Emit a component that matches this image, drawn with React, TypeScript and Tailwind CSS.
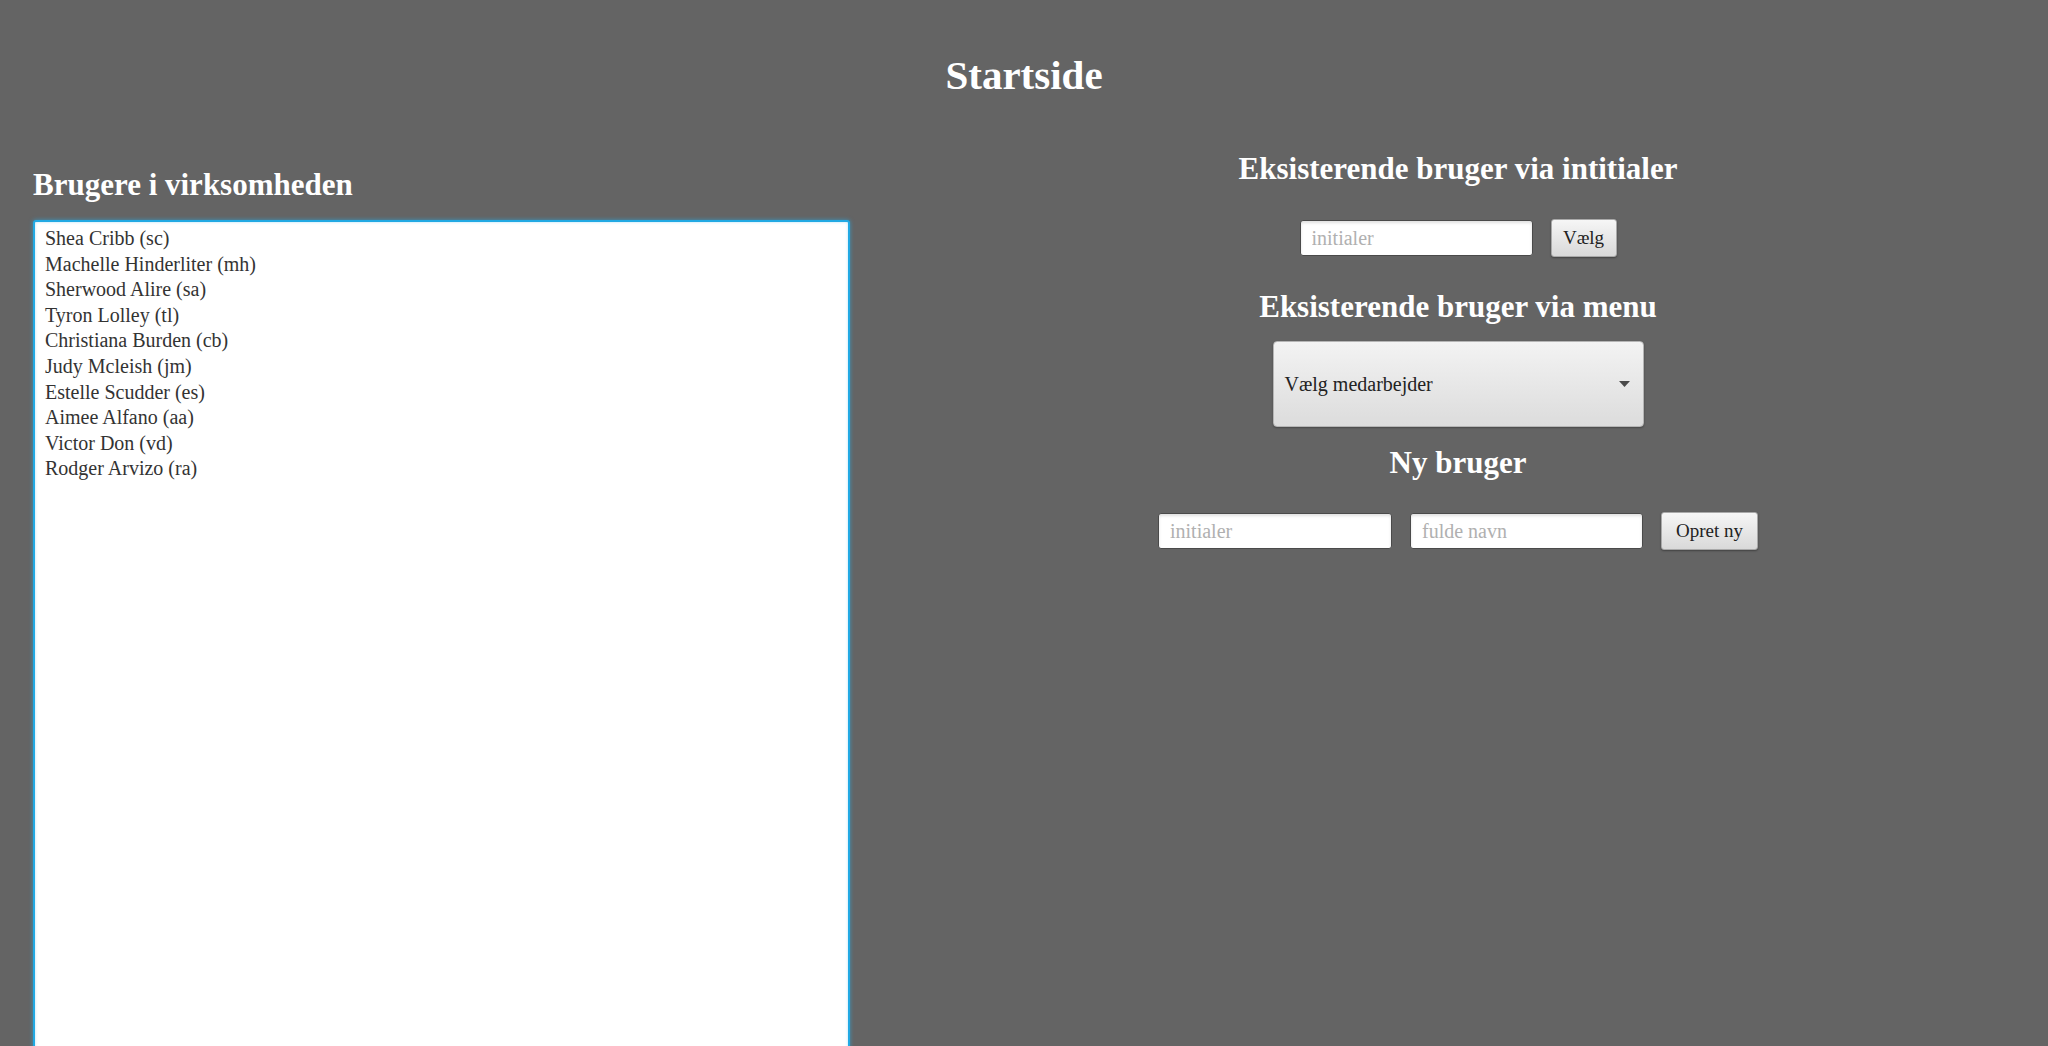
const users = [
  "Shea Cribb (sc)",
  "Machelle Hinderliter (mh)",
  "Sherwood Alire (sa)",
  "Tyron Lolley (tl)",
  "Christiana Burden (cb)",
  "Judy Mcleish (jm)",
  "Estelle Scudder (es)",
  "Aimee Alfano (aa)",
  "Victor Don (vd)",
  "Rodger Arvizo (ra)",
];

const inputClass =
  "h-[36px] rounded-[3px] border border-[#4a4a4a] bg-white px-[11px] text-[20px] text-[#333] placeholder:text-[#b0b0b0] shadow-[inset_0_2px_3px_rgba(0,0,0,0.12)] outline-none";

const buttonClass =
  "h-[38px] rounded-[3px] border border-[#a9a9a9] bg-gradient-to-b from-[#f6f6f6] to-[#d9d9d9] text-[19px] text-[#222] shadow-[0_1px_2px_rgba(0,0,0,0.35)]";

export default function App() {
  return (
    <div className="h-screen overflow-hidden bg-[#646464] font-['Liberation_Serif',serif]">
      {/* Title */}
      <h1 className="pt-[52px] text-center text-[41px] font-bold leading-[46px] text-white">
        Startside
      </h1>

      <div className="mt-[53px] flex">
        {/* Users list */}
        <div className="w-[868px] shrink-0 pl-[33px] pr-[18px] pt-[16px]">
          <h2 className="mb-[17px] text-[31px] font-bold leading-[36px] text-white">
            Brugere i virksomheden
          </h2>
          <div className="h-[840px] w-[817px] rounded-[3px] border-2 border-[#22a9e3] bg-white pl-[10px] pt-[4px] shadow-[0_0_4px_rgba(40,170,230,0.7),inset_0_0_3px_rgba(40,170,230,0.35)]">
            {users.map((u) => (
              <div key={u} className="text-[20px] leading-[25.6px] text-[#333]">
                {u}
              </div>
            ))}
          </div>
        </div>

        {/* Login / create */}
        <div className="flex flex-1 flex-col items-center">
          <h2 className="text-[31px] font-bold leading-[36px] text-white">
            Eksisterende bruger via intitialer
          </h2>
          <div className="mt-[32px] flex items-center gap-[18px]">
            <input className={`${inputClass} w-[233px]`} placeholder="initialer" />
            <button className={`${buttonClass} w-[66px]`}>Vælg</button>
          </div>

          <h2 className="mt-[32px] text-[31px] font-bold leading-[36px] text-white">
            Eksisterende bruger via menu
          </h2>
          <div className="mt-[16px] flex h-[86px] w-[371px] items-center justify-between rounded-[4px] border border-[#b5b5b5] bg-gradient-to-b from-[#f3f3f3] to-[#dcdcdc] pl-[11px] pr-[13px] shadow-[0_1px_2px_rgba(0,0,0,0.3)]">
            <span className="text-[20px] text-[#222]">Vælg medarbejder</span>
            <svg width="11" height="6" viewBox="0 0 11 6">
              <path d="M0 0 L11 0 L5.5 6 Z" fill="#4a4a4a" />
            </svg>
          </div>

          <h2 className="mt-[18px] text-[31px] font-bold leading-[36px] text-white">
            Ny bruger
          </h2>
          <div className="mt-[31px] flex items-center gap-[18px]">
            <input className={`${inputClass} w-[234px]`} placeholder="initialer" />
            <input className={`${inputClass} w-[233px]`} placeholder="fulde navn" />
            <button className={`${buttonClass} w-[97px]`}>Opret ny</button>
          </div>
        </div>
      </div>
    </div>
  );
}
